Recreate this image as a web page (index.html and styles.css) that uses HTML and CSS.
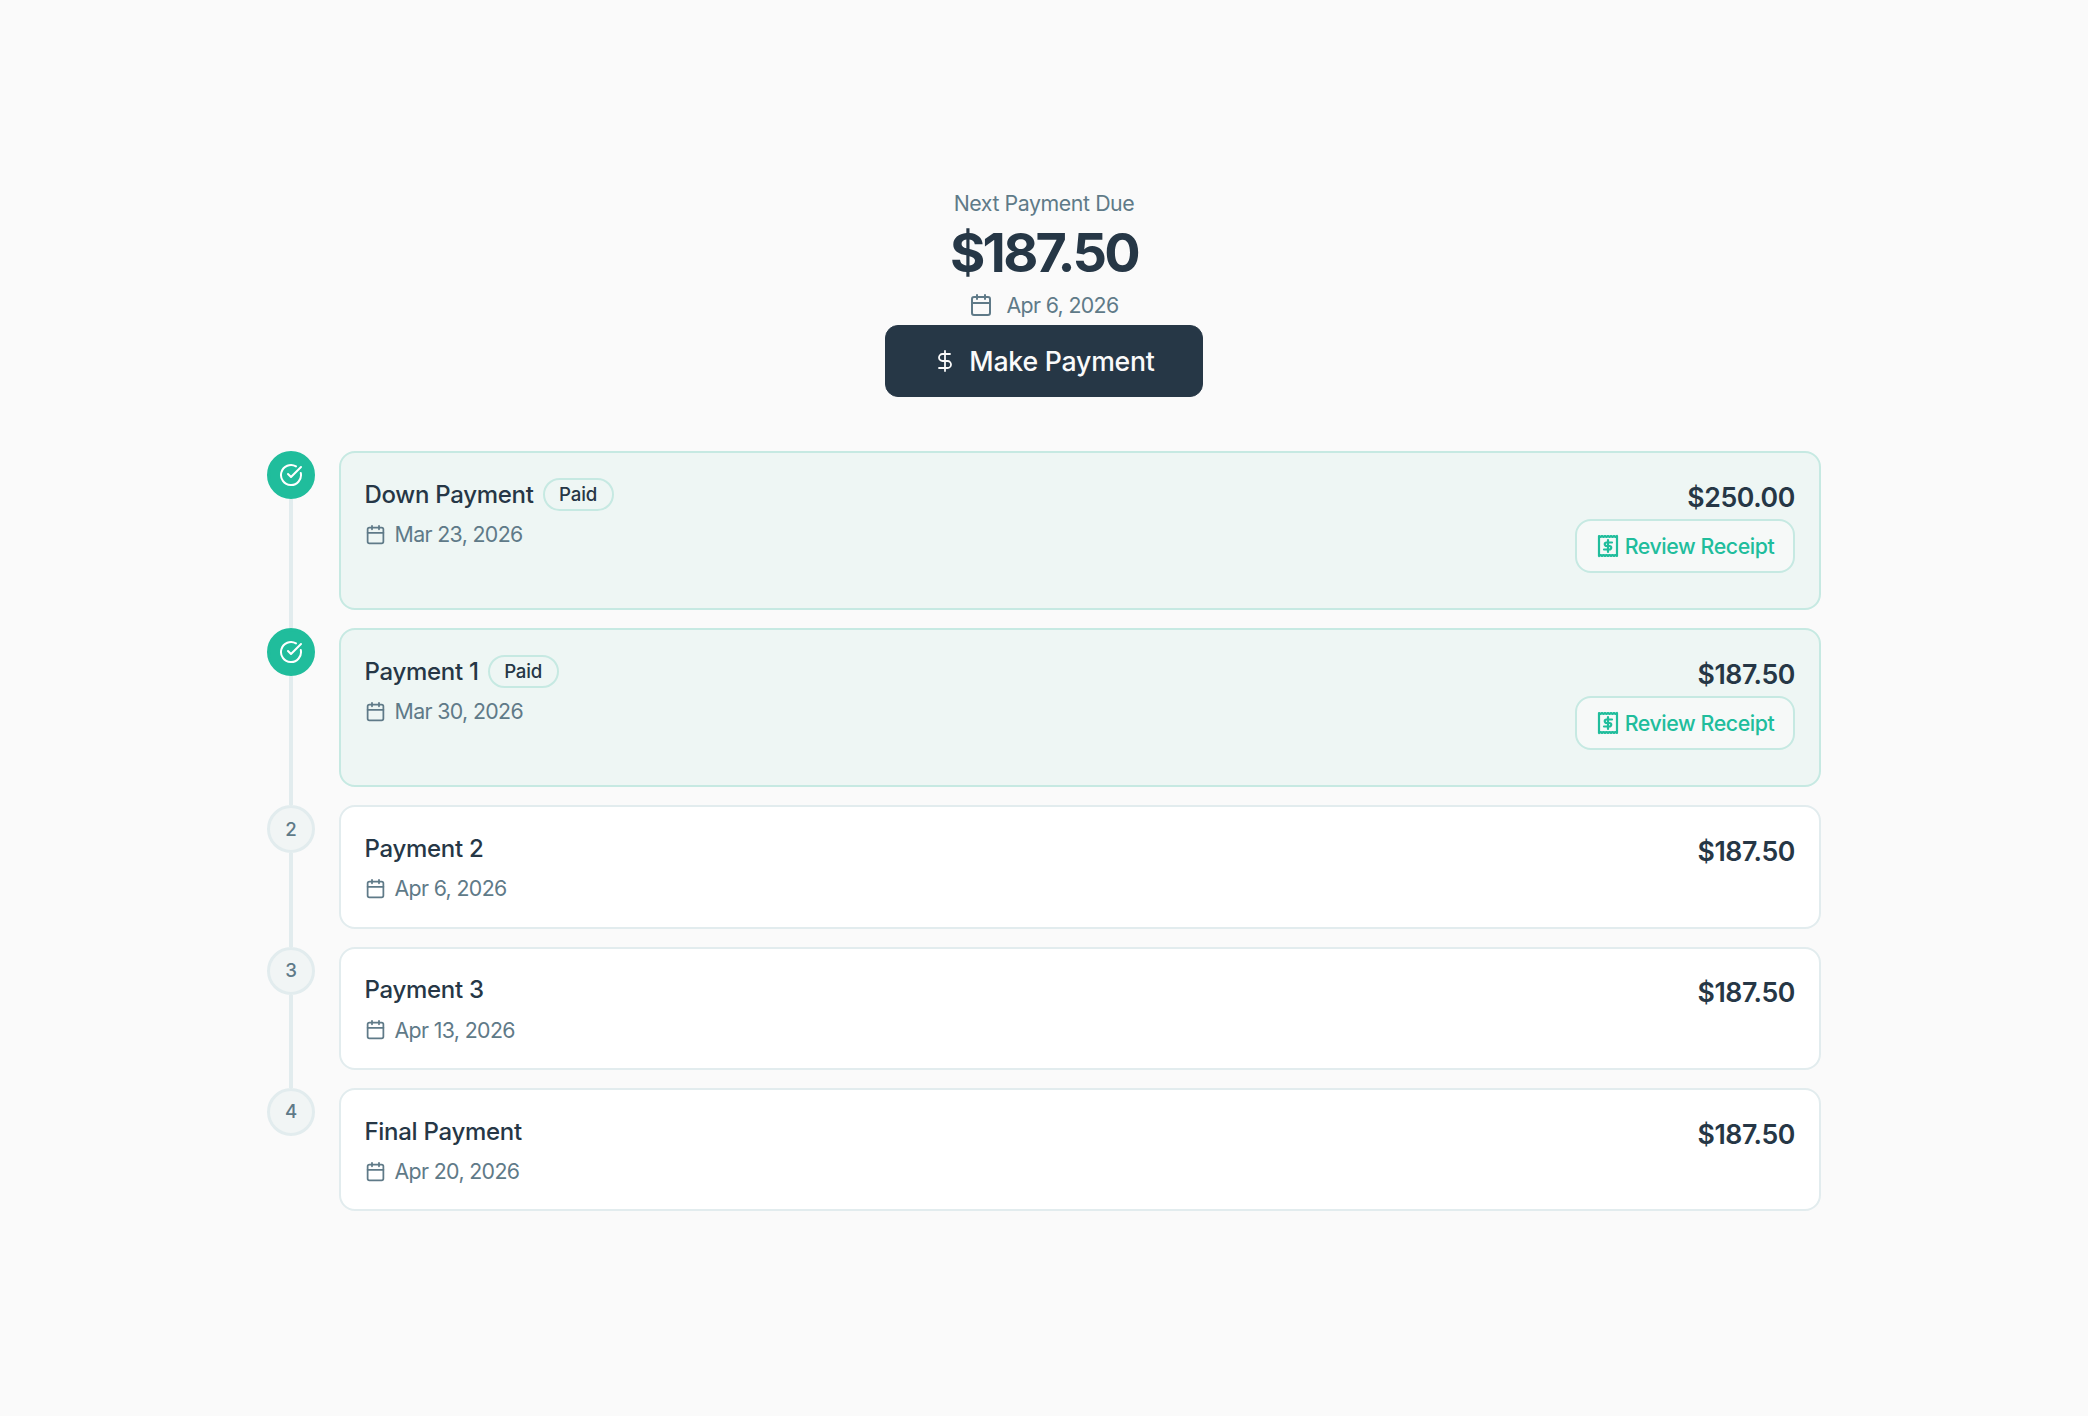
FILE: index.html
```html
<!DOCTYPE html>
<html lang="en">
<head>
<meta charset="utf-8">
<title>Payment Schedule</title>
<link rel="stylesheet" href="styles.css">
</head>
<body>
<svg class="defs" width="0" height="0" aria-hidden="true">
  <symbol id="cal" viewBox="0 0 24 24"><path d="M8 2v4M16 2v4M3 10h18"/><rect x="3" y="4" width="18" height="18" rx="2"/></symbol>
  <symbol id="chk" viewBox="0 0 24 24"><path d="M21.801 10A10 10 0 1 1 17 3.335"/><path d="m9 11 3 3L22 4"/></symbol>
  <symbol id="usd" viewBox="0 0 24 24"><path d="M12 2v20"/><path d="M17 5H9.500a3.500 3.500 0 0 0 0 7h5a3.500 3.500 0 0 1 0 7H6"/></symbol>
  <symbol id="rcp" viewBox="0 0 24 24"><path d="M3 2l1.500 1 1.500-1 1.500 1 1.500-1 1.500 1 1.500-1 1.500 1 1.500-1 1.500 1 1.500-1 1.500 1L21 2v20l-1.500-1-1.500 1-1.500-1-1.500 1-1.500-1-1.500 1-1.500-1-1.500 1-1.500-1-1.500 1-1.500-1L3 22z"/><path d="M16 8.500h-5.500a1.750 1.750 0 0 0 0 3.500h3a1.750 1.750 0 0 1 0 3.500H8"/><path d="M12 18v-12"/></symbol>
</svg>
<main class="page">
  <header class="summary">
    <div class="summary-label">Next Payment Due</div>
    <div class="summary-amount">$187.50</div>
    <div class="summary-date"><svg class="icon icon-date-lg"><use href="#cal"/></svg><span>Apr 6, 2026</span></div>
    <button class="pay-btn"><svg class="icon icon-usd"><use href="#usd"/></svg><span>Make Payment</span></button>
  </header>
  <ol class="timeline">
    <li class="step">
      <div class="rail"><div class="dot dot-done"><svg class="icon icon-chk"><use href="#chk"/></svg></div><div class="line"></div></div>
      <div class="card-wrap"><article class="card card-paid">
        <div class="info"><div class="title-row"><span class="title">Down Payment</span><span class="badge">Paid</span></div><div class="date"><svg class="icon icon-date"><use href="#cal"/></svg><span>Mar 23, 2026</span></div></div>
        <div class="side"><div class="amount">$250.00</div><button class="receipt"><svg class="icon icon-rcp"><use href="#rcp"/></svg><span>Review Receipt</span></button></div>
      </article></div>
    </li>
    <li class="step">
      <div class="rail"><div class="dot dot-done"><svg class="icon icon-chk"><use href="#chk"/></svg></div><div class="line"></div></div>
      <div class="card-wrap"><article class="card card-paid">
        <div class="info"><div class="title-row"><span class="title">Payment 1</span><span class="badge">Paid</span></div><div class="date"><svg class="icon icon-date"><use href="#cal"/></svg><span>Mar 30, 2026</span></div></div>
        <div class="side"><div class="amount">$187.50</div><button class="receipt"><svg class="icon icon-rcp"><use href="#rcp"/></svg><span>Review Receipt</span></button></div>
      </article></div>
    </li>
    <li class="step">
      <div class="rail"><div class="dot">2</div><div class="line"></div></div>
      <div class="card-wrap"><article class="card">
        <div class="info"><div class="title-row"><span class="title">Payment 2</span></div><div class="date"><svg class="icon icon-date"><use href="#cal"/></svg><span>Apr 6, 2026</span></div></div>
        <div class="side"><div class="amount">$187.50</div></div>
      </article></div>
    </li>
    <li class="step">
      <div class="rail"><div class="dot">3</div><div class="line"></div></div>
      <div class="card-wrap"><article class="card">
        <div class="info"><div class="title-row"><span class="title">Payment 3</span></div><div class="date"><svg class="icon icon-date"><use href="#cal"/></svg><span>Apr 13, 2026</span></div></div>
        <div class="side"><div class="amount">$187.50</div></div>
      </article></div>
    </li>
    <li class="step step-last">
      <div class="rail"><div class="dot">4</div></div>
      <div class="card-wrap"><article class="card">
        <div class="info"><div class="title-row"><span class="title">Final Payment</span></div><div class="date"><svg class="icon icon-date"><use href="#cal"/></svg><span>Apr 20, 2026</span></div></div>
        <div class="side"><div class="amount">$187.50</div></div>
      </article></div>
    </li>
  </ol>
</main>
</body>
</html>
```
FILE: styles.css
```css
* { box-sizing: border-box; }
html, body { margin: 0; padding: 0; }
body {
  background: #fafafa;
  font-family: "Inter", "Lato", sans-serif;
  color: #263746;
  min-height: 1416px;
}
.defs { position: absolute; }
.page { width: 1554px; margin: 0 auto; padding-top: 187px; }
.icon { fill: none; stroke: currentColor; stroke-width: 2; stroke-linecap: round; stroke-linejoin: round; flex: none; display: block; }

.summary { display: flex; flex-direction: column; align-items: center; margin-bottom: 54.3px; }
.summary-label { font-size: 21.33px; line-height: 32px; color: #5f7a88; letter-spacing: -0.02em; }
.summary-amount { font-size: 54px; line-height: 64px; font-weight: 700; margin-top: 2px; letter-spacing: -0.05em; }
.summary-date { display: flex; align-items: center; gap: 13px; font-size: 21.33px; line-height: 32px; color: #5f7a88; margin-top: 4px; margin-bottom: 4px; letter-spacing: -0.03em; }
.icon-date-lg { width: 24px; height: 24px; }
.pay-btn {
  width: 318px; height: 72px; border: 1px solid #263746; border-radius: 13px;
  background: #263746; color: #fafafa; font: 500 26.67px "Inter", sans-serif; letter-spacing: -0.008em;
  display: flex; align-items: center; justify-content: center; gap: 12px;
}
.icon-usd { width: 24px; height: 24px; stroke-width: 1.8; }

.timeline { list-style: none; margin: 0; padding: 0; }
.step { display: flex; gap: 24px; }
.rail { width: 48px; flex: none; display: flex; flex-direction: column; align-items: center; }
.dot {
  width: 48px; height: 48px; border-radius: 50%; flex: none;
  background: #f1f5f5; border: 3px solid #e2ecee; color: #5f7a88;
  font-size: 18.67px; font-weight: 500;
  display: flex; align-items: center; justify-content: center;
}
.dot-done { background: #20bd9c; border-color: #20bd9c; color: #fff; }
.icon-chk { width: 24px; height: 24px; }
.line { width: 4px; flex: 1; background: #e2ecee; }
.card-wrap { flex: 1; padding-bottom: 18px; }
.step-last .card-wrap { padding-bottom: 0; }
.card {
  display: flex; justify-content: space-between; align-items: flex-start;
  background: #fff; border: 2px solid #e2ecee; border-radius: 16px;
  padding: 23.7px 24px 22.13px 23.5px;
}
.card-paid { background: #eef6f4; border-color: #c6e9e2; }
.title-row { display: flex; align-items: center; gap: 9px; height: 36px; }
.title { font-size: 24px; line-height: 36px; font-weight: 500; letter-spacing: -0.012em; }
.badge {
  border: 2px solid #c6e9e2; border-radius: 999px; height: 33px; padding: 0 14.5px;
  font-size: 18.67px; font-weight: 500; display: flex; align-items: center; letter-spacing: -0.01em;
}
.date { display: flex; align-items: center; gap: 9px; font-size: 21.33px; line-height: 32px; color: #5f7a88; margin-top: 5.5px; letter-spacing: -0.03em; }
.icon-date { width: 21px; height: 21px; }
.side { display: flex; flex-direction: column; align-items: flex-end; }
.amount { font-size: 26.67px; line-height: 40px; font-weight: 600; letter-spacing: -0.015em; }
.receipt {
  width: 220px; height: 54px; margin-top: 2px; margin-bottom: 13.17px;
  background: #f6f9f8; border: 2px solid #c6e9e2; border-radius: 16px; color: #20bd9c;
  font: 500 21.33px "Inter", sans-serif; letter-spacing: -0.02em;
  display: flex; align-items: center; justify-content: center; gap: 5px;
}
.icon-rcp { width: 24px; height: 24px; stroke-width: 2.2; }
```
